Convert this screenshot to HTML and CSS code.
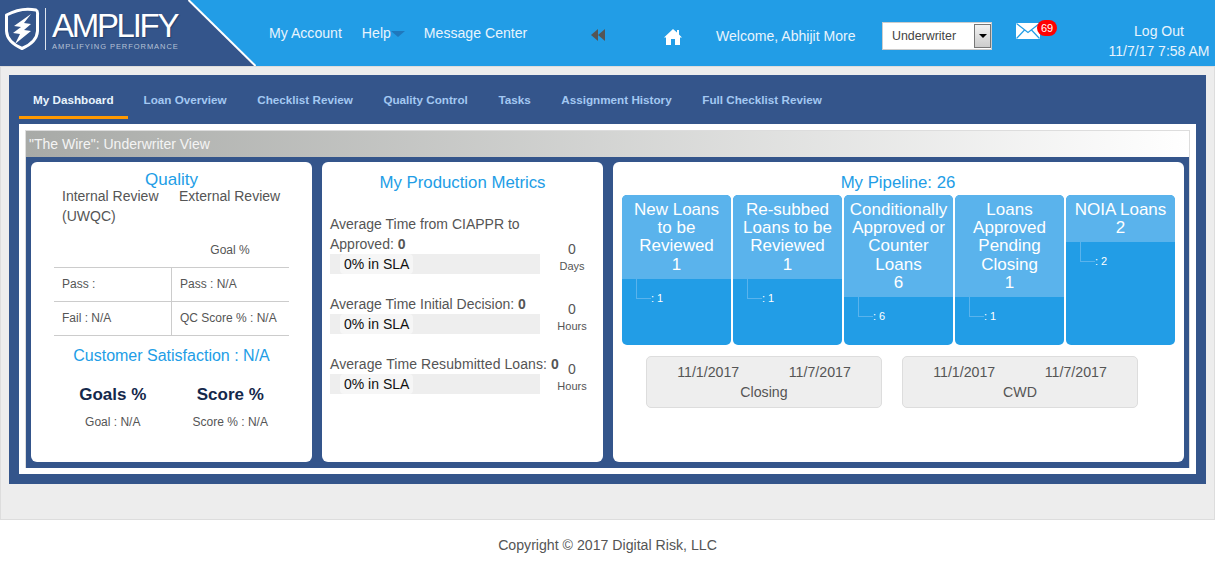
FILE: index.html
```html
<!DOCTYPE html>
<html>
<head>
  <link rel="stylesheet" href="styles.css">
  <title>Amplify - My Dashboard</title>
</head>
<body>
  <div class="header">
    <div class="logo">
      <svg class="logo-bg" width="256" height="66" viewBox="0 0 256 66">
        <polygon points="0,0 188,0 255,66 0,66" fill="#34558b"/>
        <line x1="188.5" y1="0" x2="255.5" y2="66" stroke="#fff" stroke-width="2"/>
      </svg>
      <svg class="shield" width="36" height="44" viewBox="0 0 36 44">
        <path d="M2.5 8 Q17 0 32 3 Q34 4 33.5 8 L33.5 24 Q33 35 18 41.5 Q3 35 2.5 24 Z" fill="#34558b" stroke="#fff" stroke-width="3" stroke-linejoin="round"/>
        <path d="M27 7 L10 19 L17 20 L9 26 L16 27 L11 37 L27 24 L20 23 L27 17 L20 16 Z" fill="#fff"/>
      </svg>
      <div class="logo-divider"></div>
      <div class="logo-text">
        <div class="logo-name">AMPLIFY</div>
        <div class="logo-tag">AMPLIFYING PERFORMANCE</div>
      </div>
    </div>
    <div class="nav">
      <a>My Account</a>
      <a class="help">Help<span class="help-arrow"></span></a>
      <a>Message Center</a>
    </div>
    <svg class="back-icon" width="15" height="12" viewBox="0 0 15 12">
      <polygon points="7,0 7,12 0,6" fill="#555"/>
      <polygon points="14,0 14,12 7,6" fill="#555"/>
    </svg>
    <svg class="home-icon" width="18" height="16" viewBox="0 0 18 16">
      <path d="M9 0 L13 3.6 L13 1 L15 1 L15 5.5 L18 8.4 L16 8.4 L16 16 L11 16 L11 10 L7 10 L7 16 L2 16 L2 8.4 L0 8.4 Z" fill="#fff"/>
    </svg>
    <div class="welcome">Welcome, Abhijit More</div>
    <div class="role-select">
      <span class="role-value">Underwriter</span>
      <span class="role-btn"><span class="role-arrow"></span></span>
    </div>
    <div class="mail">
      <svg width="24" height="16" viewBox="0 0 24 16">
        <rect width="24" height="16" fill="#fff"/>
        <path d="M0.5 0.5 L12 9.5 L23.5 0.5 M0.5 15.5 L8.5 7 M23.5 15.5 L15.5 7" fill="none" stroke="#229de6" stroke-width="1.2"/>
      </svg>
      <span class="badge">69</span>
    </div>
    <div class="logout">
      <div class="logout-link">Log Out</div>
      <div>11/7/17 7:58 AM</div>
    </div>
  </div>

  <div class="main">
    <div class="shell">
      <div class="tabs">
        <a class="tab active">My Dashboard</a>
        <a class="tab">Loan Overview</a>
        <a class="tab">Checklist Review</a>
        <a class="tab">Quality Control</a>
        <a class="tab">Tasks</a>
        <a class="tab">Assignment History</a>
        <a class="tab">Full Checklist Review</a>
      </div>
      <div class="panel">
        <div class="wire">
          <div class="wire-title">"The Wire": Underwriter View</div>
          <div class="cards">

            <div class="card quality">
              <div class="card-title quality-title">Quality</div>
              <div class="review-heads">
                <div class="review-a">Internal Review (UWQC)</div>
                <div class="review-b">External Review</div>
              </div>
              <div class="goal-head">Goal %</div>
              <div class="qc-table">
                <div class="qc-cell">Pass :</div>
                <div class="qc-cell">Pass : N/A</div>
                <div class="qc-cell">Fail : N/A</div>
                <div class="qc-cell">QC Score % : N/A</div>
              </div>
              <div class="card-title csat-title">Customer Satisfaction : N/A</div>
              <div class="csat">
                <div class="csat-col">
                  <div class="csat-head">Goals %</div>
                  <div class="csat-val">Goal : N/A</div>
                </div>
                <div class="csat-col">
                  <div class="csat-head">Score %</div>
                  <div class="csat-val">Score % : N/A</div>
                </div>
              </div>
            </div>

            <div class="card metrics">
              <div class="card-title metrics-title">My Production Metrics</div>
              <div class="metric">
                <div class="metric-main">
                  <div class="metric-label">Average Time from CIAPPR to Approved: <b>0</b></div>
                  <div class="sla-bar"><span class="sla-pill">0% in SLA</span></div>
                </div>
                <div class="metric-side"><div class="side-num">0</div><div class="side-unit">Days</div></div>
              </div>
              <div class="metric">
                <div class="metric-main">
                  <div class="metric-label">Average Time Initial Decision: <b>0</b></div>
                  <div class="sla-bar"><span class="sla-pill">0% in SLA</span></div>
                </div>
                <div class="metric-side"><div class="side-num">0</div><div class="side-unit">Hours</div></div>
              </div>
              <div class="metric">
                <div class="metric-main">
                  <div class="metric-label nowrap">Average Time Resubmitted Loans: <b>0</b></div>
                  <div class="sla-bar"><span class="sla-pill">0% in SLA</span></div>
                </div>
                <div class="metric-side"><div class="side-num">0</div><div class="side-unit">Hours</div></div>
              </div>
            </div>

            <div class="card pipeline">
              <div class="card-title pipeline-title">My Pipeline: 26</div>
              <div class="columns">
                <div class="column">
                  <div class="column-head">New Loans to be Reviewed<br>1</div>
                  <div class="tree"><span class="tree-line"></span><span class="tree-label">: 1</span></div>
                </div>
                <div class="column">
                  <div class="column-head">Re-subbed Loans to be Reviewed<br>1</div>
                  <div class="tree"><span class="tree-line"></span><span class="tree-label">: 1</span></div>
                </div>
                <div class="column">
                  <div class="column-head">Conditionally Approved or Counter Loans<br>6</div>
                  <div class="tree"><span class="tree-line"></span><span class="tree-label">: 6</span></div>
                </div>
                <div class="column">
                  <div class="column-head">Loans Approved Pending Closing<br>1</div>
                  <div class="tree"><span class="tree-line"></span><span class="tree-label">: 1</span></div>
                </div>
                <div class="column">
                  <div class="column-head">NOIA Loans<br>2</div>
                  <div class="tree"><span class="tree-line"></span><span class="tree-label">: 2</span></div>
                </div>
              </div>
              <div class="ranges">
                <div class="range">
                  <div class="range-dates"><span>11/1/2017</span><span>11/7/2017</span></div>
                  <div>Closing</div>
                </div>
                <div class="range">
                  <div class="range-dates"><span>11/1/2017</span><span>11/7/2017</span></div>
                  <div>CWD</div>
                </div>
              </div>
            </div>

          </div>
        </div>
      </div>
    </div>
  </div>

  <div class="footer">Copyright © 2017 Digital Risk, LLC</div>
</body>
</html>
```

FILE: styles.css
```css
* {
  box-sizing: border-box;
}
body {
  margin: 0;
  font-family: "Liberation Sans", Arial, sans-serif;
  font-size: 14px;
  color: #555;
  background-color: #fff;
}

/* header */
.header {
  display: flex;
  align-items: flex-start;
  height: 66px;
  background-color: #229de6;
  color: #e8f4fd;
}
.logo {
  position: relative;
  display: flex;
  align-items: flex-start;
  width: 269px;
  height: 66px;
  flex: none;
}
.logo-bg {
  position: absolute;
  left: 0;
  top: 0;
}
.shield {
  position: relative;
  margin: 7px 0 0 4px;
}
.logo-divider {
  position: relative;
  width: 1px;
  height: 42px;
  margin: 8px 0 0 5px;
  background-color: #dfe5ee;
}
.logo-text {
  position: relative;
  margin: 10px 0 0 6px;
}
.logo-name {
  font-size: 33px;
  line-height: 32px;
  letter-spacing: -2.3px;
  color: #fff;
  text-shadow: 1px 1px 1px #22406f;
}
.logo-tag {
  font-size: 7.5px;
  line-height: 9px;
  letter-spacing: 0.95px;
  color: #b6c2d6;
  white-space: nowrap;
}
.nav {
  display: flex;
  gap: 20px;
  width: 322px;
  flex: none;
  margin-top: 25px;
  font-size: 14.1px;
  line-height: 16px;
}
.help {
  margin-right: -1px;
}
.help-arrow {
  display: inline-block;
  width: 0;
  height: 0;
  border-left: 7px solid transparent;
  border-right: 7px solid transparent;
  border-top: 6px solid #1f78bd;
  vertical-align: 1px;
}
.back-icon {
  flex: none;
  margin-top: 29px;
}
.home-icon {
  flex: none;
  margin: 29px 0 0 58px;
}
.welcome {
  flex: none;
  width: 166px;
  margin: 28px 0 0 34px;
  font-size: 14.05px;
  line-height: 16px;
}
.role-select {
  display: flex;
  justify-content: space-between;
  flex: none;
  width: 110px;
  height: 28px;
  margin-top: 22px;
  padding: 1px;
  background-color: #fff;
  border: 1px solid #ccc;
  color: #444;
  font-size: 12.4px;
  line-height: 24px;
}
.role-value {
  padding-left: 8px;
}
.role-btn {
  display: flex;
  align-items: center;
  justify-content: center;
  width: 17px;
  margin-right: -1px;
  border: 1px solid #777;
  background: linear-gradient(#f2f2f2, #ccc);
}
.role-arrow {
  width: 0;
  height: 0;
  border-left: 4px solid transparent;
  border-right: 4px solid transparent;
  border-top: 4px solid #000;
}
.mail {
  position: relative;
  flex: none;
  width: 24px;
  height: 16px;
  margin: 23px 0 0 24px;
}
.mail svg {
  display: block;
}
.badge {
  position: absolute;
  left: 21px;
  top: -3px;
  width: 20px;
  height: 16px;
  border-radius: 8px;
  background-color: #f00;
  color: #fff;
  font-size: 11px;
  line-height: 16px;
  text-align: center;
}
.logout {
  flex: none;
  width: 110px;
  margin: 21px 0 0 64px;
  text-align: center;
  line-height: 20px;
  white-space: nowrap;
}

/* main area */
.main {
  height: 454px;
  padding: 8px 8px 0;
  background-color: #ededed;
  border: 1px solid #ddd;
}
.shell {
  height: 409px;
  padding: 0 10px 10px;
  background-color: #34558b;
}
.tabs {
  display: flex;
  height: 49px;
  padding-top: 6px;
}
.tab {
  height: 38px;
  margin-right: 2.6px;
  padding: 11px 14px 0;
  font-size: 11.7px;
  font-weight: bold;
  line-height: 16px;
  color: #a3c8f2;
}
.tab.active {
  margin-right: 2px;
  color: #e8f4fd;
  border-bottom: 3px solid #f90;
}
.panel {
  height: 350px;
  padding: 6px;
  background-color: #fff;
}
.wire {
  height: 338px;
  border: 1px solid #ddd;
  border-bottom: none;
  background-color: #34558b;
}
.wire-title {
  height: 26px;
  padding-left: 3px;
  background: linear-gradient(to right, #a8aaa7, #fff);
  color: #f4f4f4;
  line-height: 26px;
}
.cards {
  display: flex;
  gap: 10px;
  padding: 5px;
}
.card {
  height: 300px;
  background-color: #fff;
  border-radius: 6px;
}
.card-title {
  color: #229de6;
  font-size: 17px;
  line-height: 20px;
  text-align: center;
}

/* quality card */
.quality {
  width: 281px;
  padding: 8px 23px 0;
}
.review-heads {
  display: flex;
  margin-top: -4px;
  line-height: 20px;
}
.review-a {
  width: 117px;
  margin-left: 8px;
}
.goal-head {
  margin: 14px 0 0 117px;
  width: 118px;
  font-size: 12px;
  line-height: 20px;
  text-align: center;
}
.qc-table {
  display: grid;
  grid-template-columns: 118px 117px;
  grid-auto-rows: 34px;
  margin-top: 7px;
  border-top: 1px solid #ccc;
}
.qc-cell {
  padding-left: 8px;
  font-size: 12px;
  line-height: 33px;
  border-bottom: 1px solid #ccc;
}
.qc-cell:nth-child(odd) {
  border-right: 1px solid #ccc;
}
.csat-title {
  margin-top: 10px;
  font-size: 16px;
}
.csat {
  display: flex;
  margin-top: 19px;
}
.csat-col {
  width: 118px;
  text-align: center;
}
.csat-head {
  color: #14284b;
  font-size: 17px;
  font-weight: bold;
  line-height: 20px;
}
.csat-val {
  margin-top: 8px;
  font-size: 12px;
  line-height: 18px;
}

/* metrics card */
.metrics {
  width: 281px;
  padding: 11px 8px 0;
}
.metrics-title {
  margin-bottom: 21px;
  font-size: 16.8px;
}
.metric {
  display: flex;
  align-items: flex-end;
  margin-bottom: 20px;
}
.metric-main {
  width: 210px;
  flex: none;
}
.metric-label {
  line-height: 20px;
}
.nowrap {
  white-space: nowrap;
  letter-spacing: 0.08px;
}
.sla-bar {
  height: 20px;
  padding-left: 10px;
  background-color: #eee;
}
.sla-pill {
  display: inline-block;
  height: 20px;
  padding: 0 4px;
  background-color: #f6f6f6;
  border-radius: 4px;
  color: #111;
  line-height: 20px;
  letter-spacing: 0;
}
.metric-side {
  width: 64px;
  flex: none;
  text-align: center;
}
.side-num {
  line-height: 20px;
}
.side-unit {
  font-size: 11px;
  line-height: 15px;
}

/* pipeline card */
.pipeline {
  width: 571px;
  padding: 11px 9px 0;
}
.pipeline-title {
  margin-left: -1px;
  font-size: 16.8px;
}
.columns {
  display: flex;
  gap: 2px;
  height: 150px;
  margin-top: 2px;
}
.column {
  width: 109px;
  height: 150px;
  background-color: #229de6;
  border-radius: 5px;
  overflow: hidden;
}
.column-head {
  padding: 6px 4px 5px;
  background-color: #5ab3ec;
  color: #fff;
  font-size: 17px;
  line-height: 18.2px;
  text-align: center;
}
.tree {
  display: flex;
  align-items: flex-end;
  margin-left: 14px;
}
.tree-line {
  width: 15px;
  height: 20px;
  border-left: 1px solid #5ab3ec;
  border-bottom: 1px solid #5ab3ec;
}
.tree-label {
  margin-bottom: -6px;
  color: #fff;
  font-size: 11px;
  line-height: 13px;
}
.ranges {
  display: flex;
  gap: 20px;
  margin: 11px 0 0 24px;
}
.range {
  width: 236px;
  height: 52px;
  padding-top: 5px;
  background-color: #eee;
  border: 1px solid #ddd;
  border-radius: 5px;
  font-size: 14.2px;
  line-height: 20px;
  text-align: center;
}
.range-dates {
  display: flex;
  justify-content: center;
  gap: 49.5px;
}

/* footer */
.footer {
  height: 43px;
  padding-top: 17px;
  font-size: 14.15px;
  line-height: 16px;
  text-align: center;
}
```
